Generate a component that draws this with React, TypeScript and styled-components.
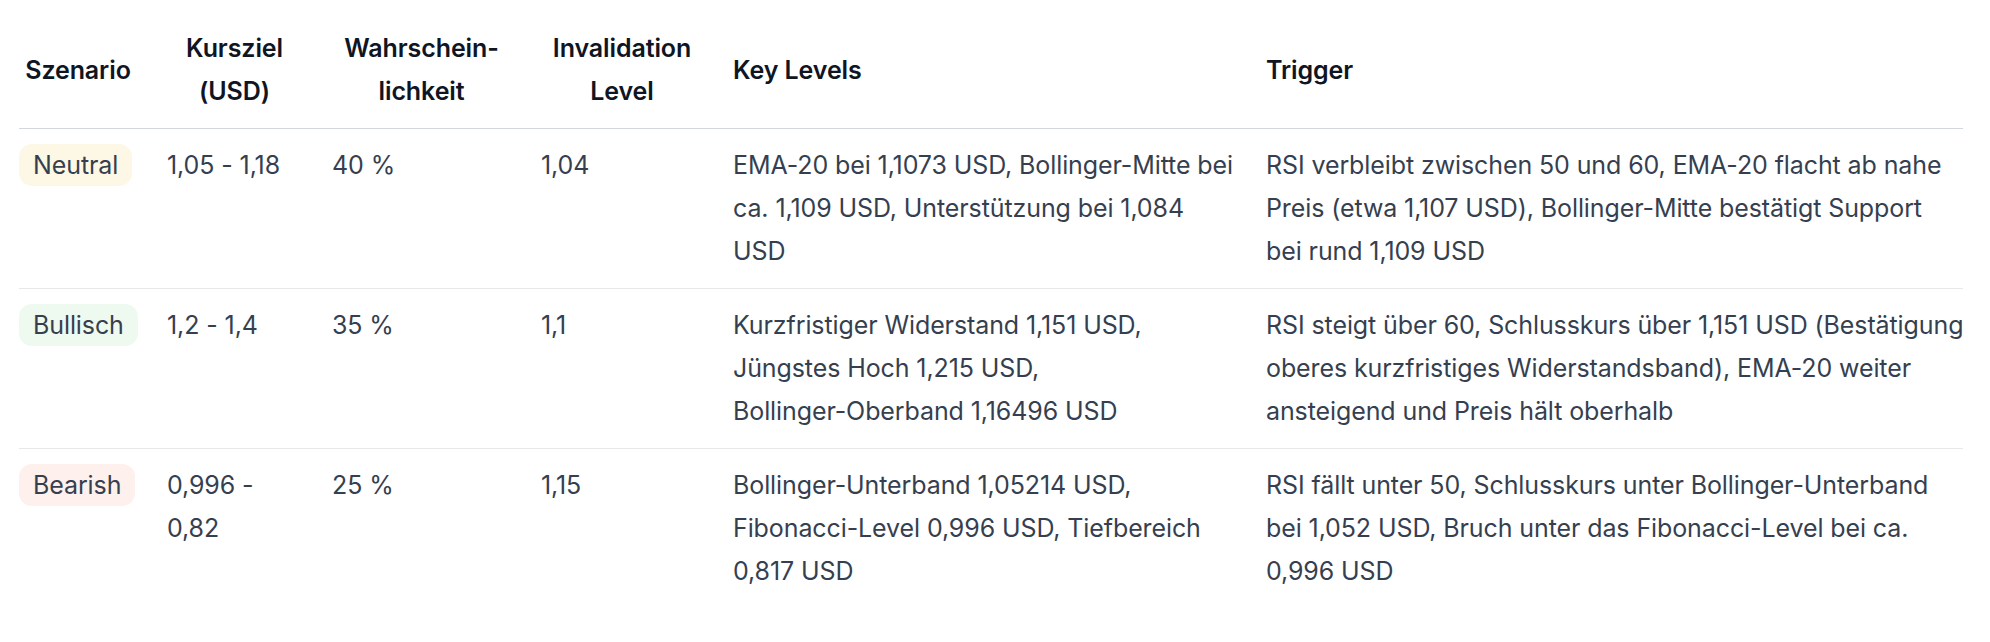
import React from "react";
import styled, { createGlobalStyle, css } from "styled-components";

type Tone = "neutral" | "bull" | "bear";

interface Scenario {
  name: string;
  tone: Tone;
  target: string[];
  probability: string;
  invalidation: string;
  levels: string[];
  trigger: string[];
}

const scenarios: Scenario[] = [
  {
    name: "Neutral",
    tone: "neutral",
    target: ["1,05 - 1,18"],
    probability: "40 %",
    invalidation: "1,04",
    levels: [
      "EMA-20 bei 1,1073 USD, Bollinger-Mitte bei",
      "ca. 1,109 USD, Unterstützung bei 1,084",
      "USD",
    ],
    trigger: [
      "RSI verbleibt zwischen 50 und 60, EMA-20 flacht ab nahe",
      "Preis (etwa 1,107 USD), Bollinger-Mitte bestätigt Support",
      "bei rund 1,109 USD",
    ],
  },
  {
    name: "Bullisch",
    tone: "bull",
    target: ["1,2 - 1,4"],
    probability: "35 %",
    invalidation: "1,1",
    levels: [
      "Kurzfristiger Widerstand 1,151 USD,",
      "Jüngstes Hoch 1,215 USD,",
      "Bollinger-Oberband 1,16496 USD",
    ],
    trigger: [
      "RSI steigt über 60, Schlusskurs über 1,151 USD (Bestätigung",
      "oberes kurzfristiges Widerstandsband), EMA-20 weiter",
      "ansteigend und Preis hält oberhalb",
    ],
  },
  {
    name: "Bearish",
    tone: "bear",
    target: ["0,996 -", "0,82"],
    probability: "25 %",
    invalidation: "1,15",
    levels: [
      "Bollinger-Unterband 1,05214 USD,",
      "Fibonacci-Level 0,996 USD, Tiefbereich",
      "0,817 USD",
    ],
    trigger: [
      "RSI fällt unter 50, Schlusskurs unter Bollinger-Unterband",
      "bei 1,052 USD, Bruch unter das Fibonacci-Level bei ca.",
      "0,996 USD",
    ],
  },
];

const columns: { label: string[]; width: number; align: "center" | "left" }[] = [
  { label: ["Szenario"], width: 133, align: "center" },
  { label: ["Kursziel", "(USD)"], width: 165, align: "center" },
  { label: ["Wahrschein-", "lichkeit"], width: 209, align: "center" },
  { label: ["Invalidation", "Level"], width: 192, align: "center" },
  { label: ["Key Levels"], width: 533, align: "left" },
  { label: ["Trigger"], width: 712, align: "left" },
];

const GlobalStyle = createGlobalStyle`
  html, body {
    margin: 0;
    padding: 0;
    background: #ffffff;
  }
  body {
    font-family: Inter, "Noto Sans", "Liberation Sans", sans-serif;
    -webkit-font-smoothing: antialiased;
  }
`;

const Page = styled.div`
  padding: 12px 27px 0 19px;
`;

const Table = styled.table`
  width: 1944px;
  table-layout: fixed;
  border-collapse: collapse;
  font-size: 25px;
  line-height: 43px;
  letter-spacing: -0.1px;
`;

const Col = styled.col<{ $width: number }>`
  width: ${(p) => p.$width}px;
`;

const HeadRow = styled.tr`
  border-bottom: 1px solid #d3d6db;
`;

const HeadCell = styled.th<{ $align: "center" | "left" }>`
  padding: 15px;
  text-align: ${(p) => p.$align};
  vertical-align: middle;
  font-weight: 600;
  color: #0f1523;

  &:first-child {
    padding-left: 0;
  }
  &:last-child {
    padding-right: 0;
  }
`;

const BodyRow = styled.tr`
  border-bottom: 1px solid #e7e8ea;

  &:last-child {
    border-bottom: none;
  }
`;

const Cell = styled.td`
  padding: 15px;
  vertical-align: top;
  text-align: left;
  color: #363f4f;

  &:first-child {
    padding-left: 0;
  }
  &:last-child {
    padding-right: 0;
  }
`;

const Line = styled.span`
  display: block;
  white-space: nowrap;
`;

const toneColors: Record<Tone, string> = {
  neutral: "#fdf8e5",
  bull: "#eefaf0",
  bear: "#fdf0ed",
};

const Badge = styled.span<{ $tone: Tone }>`
  display: inline-block;
  height: 42px;
  line-height: 42px;
  padding: 0 14px;
  border-radius: 13px;
  ${(p) => css`
    background: ${toneColors[p.$tone]};
  `}
`;

function Lines({ lines }: { lines: string[] }) {
  return (
    <>
      {lines.map((l) => (
        <Line key={l}>{l}</Line>
      ))}
    </>
  );
}

export default function App() {
  return (
    <Page>
      <GlobalStyle />
      <Table>
        <colgroup>
          {columns.map((c) => (
            <Col key={c.label.join(" ")} $width={c.width} />
          ))}
        </colgroup>
        <thead>
          <HeadRow>
            {columns.map((c) => (
              <HeadCell key={c.label.join(" ")} $align={c.align}>
                <Lines lines={c.label} />
              </HeadCell>
            ))}
          </HeadRow>
        </thead>
        <tbody>
          {scenarios.map((s) => (
            <BodyRow key={s.name}>
              <Cell>
                <Badge $tone={s.tone}>{s.name}</Badge>
              </Cell>
              <Cell>
                <Lines lines={s.target} />
              </Cell>
              <Cell>{s.probability}</Cell>
              <Cell>{s.invalidation}</Cell>
              <Cell>
                <Lines lines={s.levels} />
              </Cell>
              <Cell>
                <Lines lines={s.trigger} />
              </Cell>
            </BodyRow>
          ))}
        </tbody>
      </Table>
    </Page>
  );
}
